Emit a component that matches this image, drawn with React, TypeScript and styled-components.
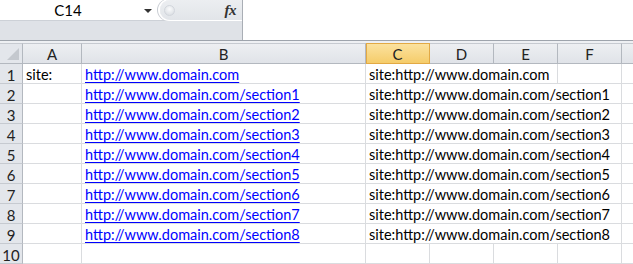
import React from "react";
import styled, { createGlobalStyle } from "styled-components";

const Global = createGlobalStyle`
  html, body { margin: 0; padding: 0; background: #fff; }
  body { font-family: "Lato", "Liberation Sans", sans-serif; overflow: hidden; }
  * { box-sizing: border-box; }
`;

const Page = styled.div`
  width: 633px;
  height: 264px;
  overflow: hidden;
  display: flex;
  flex-direction: column;
`;

const FormulaArea = styled.div`
  display: flex;
  height: 41px;
  flex-shrink: 0;
  border-bottom: 1px solid #9ea4ac;
`;

const LeftBlock = styled.div`
  width: 243px;
  display: flex;
  flex-direction: column;
  border-right: 1px solid #a9aeb5;
`;

const TopLine = styled.div`
  height: 21px;
  display: flex;
  border-bottom: 1px solid #cdd1d7;
`;

const NameBox = styled.div`
  width: 158px;
  display: flex;
  align-items: center;
  background: #fff;
`;

const NameText = styled.span`
  flex: 1;
  text-align: center;
  font-size: 15px;
  color: #000;
  padding-left: 6px;
  padding-right: 14px;
  line-height: 20px;
`;

const DropArrow = styled.span`
  width: 0;
  height: 0;
  border-left: 4px solid transparent;
  border-right: 4px solid transparent;
  border-top: 4px solid #333;
  margin-right: 6px;
  margin-top: 1px;
`;

const FxZone = styled.div`
  flex: 1;
  display: flex;
  align-items: center;
  justify-content: space-between;
  background: linear-gradient(#eceef1, #e2e5e9);
  border-radius: 11px 0 0 11px;
  box-shadow: -1px 0 0 1px #fff, -2px 0 0 1px #c9cdd3;
  margin-left: 2px;
  padding: 0 6px 0 4px;
`;

const Grip = styled.span`
  width: 11px;
  height: 11px;
  border-radius: 50%;
  background: radial-gradient(circle at 50% 35%, #fafbfc, #d5d9de);
  border: 1px solid #d2d6dc;
`;

const Fx = styled.span`
  font-family: "Liberation Serif", serif;
  font-style: italic;
  font-weight: bold;
  font-size: 15px;
  color: #333;
  letter-spacing: -0.5px;
`;

const GrayBand = styled.div`
  flex: 1;
  background: #dfe2e7;
`;

const FormulaInput = styled.div`
  flex: 1;
  background: #fff;
`;

const Spacer = styled.div`
  height: 2px;
  flex-shrink: 0;
  background: #eef0f3;
`;

const Sheet = styled.div`
  display: grid;
  grid-template-columns: 23px 59px 284px 64px 64px 64px 64px 64px;
  grid-auto-rows: 20px;
  grid-template-rows: 21px;
  font-size: 14.5px;
  color: #000;
`;

const Corner = styled.div`
  background: #e3e6eb;
  border-right: 1px solid #b3b8bf;
  border-bottom: 1px solid #b3b8bf;
  border-top: 1px solid #c6cad0;
  position: relative;
  &::after {
    content: "";
    position: absolute;
    right: 3px;
    bottom: 3px;
    width: 0;
    height: 0;
    border-left: 12px solid transparent;
    border-bottom: 12px solid #c4c8ce;
  }
`;

const ColHead = styled.div<{ $sel?: boolean }>`
  display: flex;
  align-items: center;
  justify-content: center;
  background: ${(p) =>
    p.$sel
      ? "linear-gradient(#fbe29f, #f5cc6a)"
      : "linear-gradient(#edeff2, #e0e3e8)"};
  border-top: 1px solid ${(p) => (p.$sel ? "#e2a944" : "#c6cad0")};
  border-right: 1px solid ${(p) => (p.$sel ? "#e2a944" : "#b3b8bf")};
  border-bottom: 1px solid ${(p) => (p.$sel ? "#e2a944" : "#b3b8bf")};
  ${(p) => (p.$sel ? "box-shadow: inset 1px 0 0 #e2a944;" : "")}
  color: #222;
  font-size: 15px;
  padding-top: 1px;
`;

const RowHead = styled.div`
  display: flex;
  align-items: flex-end;
  justify-content: center;
  background: #e3e6eb;
  border-right: 1px solid #b3b8bf;
  border-bottom: 1px solid #c6cad0;
  color: #222;
  font-size: 15px;
  line-height: 16px;
`;

const Cell = styled.div<{ $span?: number }>`
  grid-column: span ${(p) => p.$span ?? 1};
  display: flex;
  align-items: flex-end;
  padding: 0 0 0 3px;
  border-right: 1px solid #dadcdf;
  border-bottom: 1px solid #dadcdf;
  white-space: nowrap;
  overflow: hidden;
  line-height: 16px;
`;

const Link = styled.span`
  color: #0000ff;
  text-decoration: underline;
  text-underline-offset: 2px;
`;

const cols = ["A", "B", "C", "D", "E", "F", ""];

const rows = Array.from({ length: 10 }, (_, i) => i + 1);

export default function App() {
  return (
    <Page>
      <Global />
      <FormulaArea>
        <LeftBlock>
          <TopLine>
            <NameBox>
              <NameText>C14</NameText>
              <DropArrow />
            </NameBox>
            <FxZone>
              <Grip />
              <Fx>fx</Fx>
            </FxZone>
          </TopLine>
          <GrayBand />
        </LeftBlock>
        <FormulaInput />
      </FormulaArea>
      <Spacer />
      <Sheet>
        <Corner />
        {cols.map((c, i) => (
          <ColHead key={i} $sel={c === "C"}>
            {c}
          </ColHead>
        ))}
        {rows.map((r) => {
          const url =
            r === 1
              ? "http://www.domain.com"
              : r <= 9
              ? `http://www.domain.com/section${r - 1}`
              : "";
          return (
            <React.Fragment key={r}>
              <RowHead>{r}</RowHead>
              <Cell>{r === 1 ? "site:" : ""}</Cell>
              <Cell>{url && <Link>{url}</Link>}</Cell>
              {r === 1 ? (
                <>
                  <Cell $span={3}>site:{url}</Cell>
                  <Cell />
                  <Cell />
                </>
              ) : r <= 9 ? (
                <>
                  <Cell $span={4}>site:{url}</Cell>
                  <Cell />
                </>
              ) : (
                <>
                  <Cell />
                  <Cell />
                  <Cell />
                  <Cell />
                  <Cell />
                </>
              )}
            </React.Fragment>
          );
        })}
      </Sheet>
    </Page>
  );
}
